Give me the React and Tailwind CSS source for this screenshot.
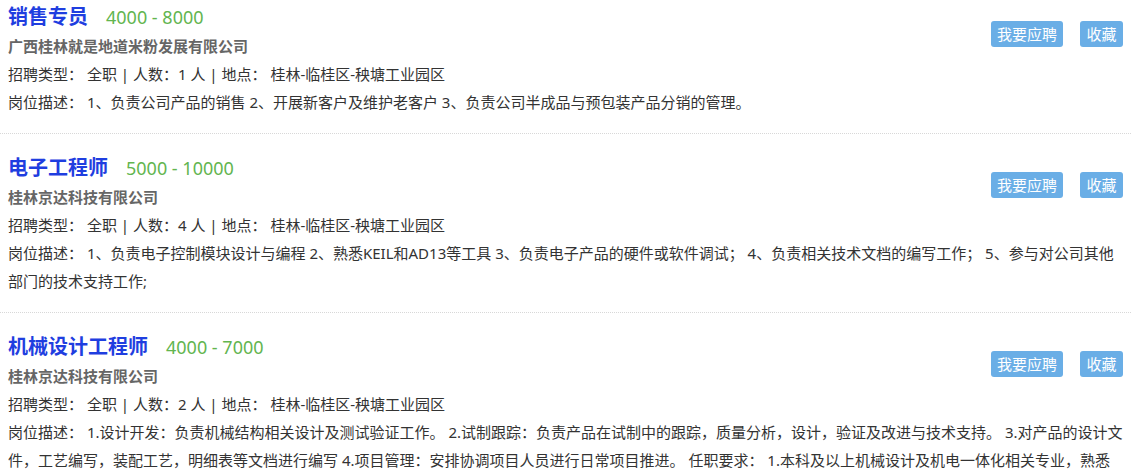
import React from 'react';

const jobs = [
  {
    title: '销售专员',
    salary: '4000 - 8000',
    company: '广西桂林就是地道米粉发展有限公司',
    count: 1,
    desc: '1、负责公司产品的销售 2、开展新客户及维护老客户 3、负责公司半成品与预包装产品分销的管理。',
  },
  {
    title: '电子工程师',
    salary: '5000 - 10000',
    company: '桂林京达科技有限公司',
    count: 4,
    desc: '1、负责电子控制模块设计与编程 2、熟悉KEIL和AD13等工具 3、负责电子产品的硬件或软件调试； 4、负责相关技术文档的编写工作； 5、参与对公司其他部门的技术支持工作;',
  },
  {
    title: '机械设计工程师',
    salary: '4000 - 7000',
    company: '桂林京达科技有限公司',
    count: 2,
    desc: '1.设计开发：负责机械结构相关设计及测试验证工作。 2.试制跟踪：负责产品在试制中的跟踪，质量分析，设计，验证及改进与技术支持。 3.对产品的设计文件，工艺编写，装配工艺，明细表等文档进行编写 4.项目管理：安排协调项目人员进行日常项目推进。 任职要求： 1.本科及以上机械设计及机电一体化相关专业，熟悉机械设计软件，能独立完成设计工作。',
  },
];

export default function App() {
  return (
    <div
      className="h-[469px] overflow-hidden bg-white text-[15px] text-[#333]"
      style={{ fontFamily: '"Noto Sans", "Noto Sans CJK SC", sans-serif' }}
    >
      <div className="-mt-[17px]">
        {jobs.map((job) => (
          <div key={job.title} className="border-b border-dotted border-[#d8d8d8] px-2 pt-[19px] pb-[17px]">
            <div className="flex items-start justify-between">
              <div>
                <div className="flex h-[30px] items-center">
                  <span className="text-[20px] font-bold text-[#1f3ee0]">{job.title}</span>
                  <span className="ml-[18px] text-[18px] text-[#62b54f]">{job.salary}</span>
                </div>
                <div className="h-[28px] leading-[28px] font-bold text-[#666]">{job.company}</div>
              </div>
              <div className="mt-[19px] flex gap-[17px]">
                <button className="h-[26px] w-[72px] rounded-[3px] bg-[#6aaee6] text-[15px] text-white">
                  我要应聘
                </button>
                <button className="h-[26px] w-[43px] rounded-[3px] bg-[#6aaee6] text-[15px] text-white">
                  收藏
                </button>
              </div>
            </div>
            <div className="leading-[28px]">
              招聘类型： 全职 | 人数：{job.count} 人 | 地点： 桂林-临桂区-秧塘工业园区
            </div>
            <div className="leading-[28px]">岗位描述： {job.desc}</div>
          </div>
        ))}
      </div>
    </div>
  );
}
